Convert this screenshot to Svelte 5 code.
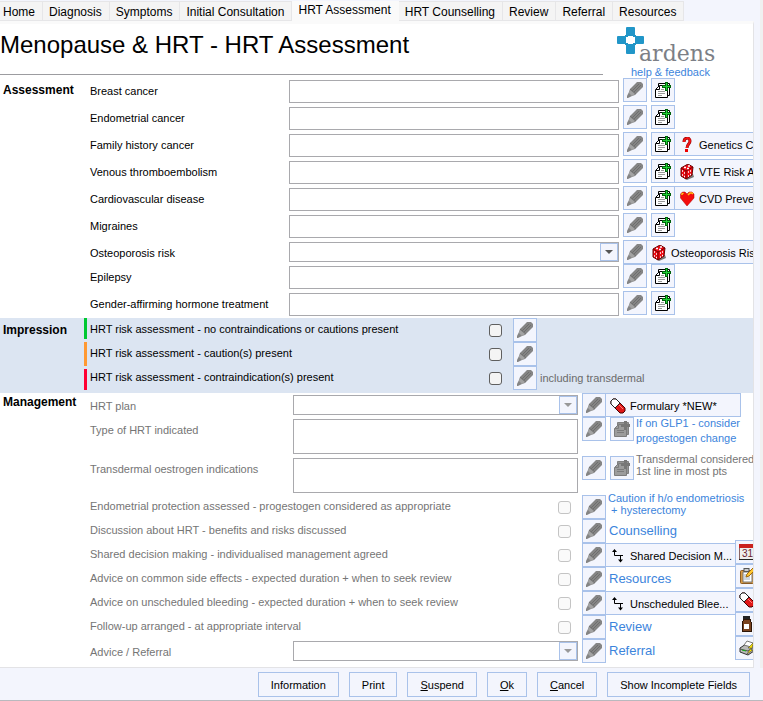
<script lang="ts">
  const tabs = ['Home', 'Diagnosis', 'Symptoms', 'Initial Consultation', 'HRT Assessment', 'HRT Counselling', 'Review', 'Referral', 'Resources'];
  let active = $state('HRT Assessment');

  const assessment = [
    { id: 'breast', label: 'Breast cancer' },
    { id: 'endometrial', label: 'Endometrial cancer' },
    { id: 'family', label: 'Family history cancer', icon: 'question', action: 'Genetics Counselling' },
    { id: 'vte', label: 'Venous thromboembolism', icon: 'dice', action: 'VTE Risk Assessment' },
    { id: 'cvd', label: 'Cardiovascular disease', icon: 'heart', action: 'CVD Prevention' },
    { id: 'migraines', label: 'Migraines' },
    { id: 'osteo', label: 'Osteoporosis risk', icon: 'dice', action: 'Osteoporosis Risk', select: true },
    { id: 'epilepsy', label: 'Epilepsy' },
    { id: 'gender', label: 'Gender-affirming hormone treatment' }
  ];

  const impressions = [
    { id: 'none', level: 'green', label: 'HRT risk assessment - no contraindications or cautions present' },
    { id: 'caution', level: 'amber', label: 'HRT risk assessment - caution(s) present' },
    { id: 'contra', level: 'red', label: 'HRT risk assessment - contraindication(s) present', note: 'including transdermal' }
  ];

  const checks = [
    { id: 'protection', label: 'Endometrial protection assessed - progestogen considered as appropriate', caution: true },
    { id: 'discussion', label: 'Discussion about HRT - benefits and risks discussed', link: 'Counselling' },
    { id: 'shared', label: 'Shared decision making - individualised management agreed', action: 'Shared Decision M...' },
    { id: 'effects', label: 'Advice on common side effects - expected duration + when to seek review', link: 'Resources' },
    { id: 'bleeding', label: 'Advice on unscheduled bleeding - expected duration + when to seek review', action: 'Unscheduled Blee...' },
    { id: 'followup', label: 'Follow-up arranged - at appropriate interval', link: 'Review' }
  ];

  const side = [
    { icon: 'calendar', name: 'Calendar' },
    { icon: 'clipboard', name: 'Notes' },
    { icon: 'pill', name: 'Medication' },
    { icon: 'bottle', name: 'Dispensing' },
    { icon: 'printer', name: 'Print' }
  ];
</script>

{#snippet glyph(name: string)}
  <svg class="glyph" viewBox="0 0 16 16" width="16" height="16" aria-hidden="true">
    {#if name === 'pen'}
      <path d="M10 0h4l2 2v3L8 13l-3 1-4 2H0v-2l2-4 1-3z" fill="#858585" />
      <path d="M5 9l7-7M7 10l7-7" stroke="#6e6e6e" fill="none" />
      <path d="M3 8l5 4-3 2-3-3z" fill="#a3a3a3" />
      <path d="M3 7l6 5" stroke="#737373" fill="none" />
    {:else if name === 'docs'}
      <path d="M3.5 1.5h11v12h-11z" fill="#fff" stroke="#000" />
      <path d="M4.5 3.5h8v12h-12v-8z" fill="#fff" stroke="#000" />
      <path d="M1 7.5h3.5V4" fill="none" stroke="#000" />
      <path d="M6 7.500h3M3 9.500h7M3 11.500h7M3 13.500h4" stroke="#9a9a9a" />
      <path d="M10 0h3v3h3v3h-3v3h-3V6H7V3h3z" fill="#00600a" />
      <path d="M11 1h1v3h3v1h-3v3h-1V5H8V4h3z" fill="#1fd034" />
    {:else if name === 'docs-off'}
      <path d="M3.5 1.5h11v12h-11z" fill="#939393" stroke="#808080" />
      <path d="M4.5 3.5h8v12h-12v-8z" fill="#9c9c9c" stroke="#7c7c7c" />
      <path d="M1 7.5h3.5V4M3 9.500h7M3 11.500h7" fill="none" stroke="#7c7c7c" />
      <path d="M10 0h3v3h3v3h-3v3h-3V6H7V3h3z" fill="#777" />
    {:else if name === 'question'}
      <path d="M5 5c0-5 6-5 6-1 0 3-3 3-3 7" fill="none" stroke="#8a0000" stroke-width="3" />
      <path d="M5 5c0-5 6-5 6-1 0 3-3 3-3 7" fill="none" stroke="#f21414" stroke-width="2" />
      <rect x="6" y="12" width="3" height="3" fill="#e00" />
    {:else if name === 'dice'}
      <path d="M3 12l5 4 7-3-1-3z" fill="#777" />
      <path d="M2 4l7-4 5 3-1 8-6 4-5-3z" fill="#ee0a14" stroke="#600" />
      <path d="M2 4l5 3 7-4M7 7v8" stroke="#700" fill="none" />
      <path d="M5 3.500h2M9 2h2M8 4.500h2M3 7h1M5 9h1M3 11h1M5 12.500h1M9 8h1M11 7h1M9 12h1M11 10.500h1" stroke="#fff" stroke-width="1.500" />
    {:else if name === 'heart'}
      <path d="M8 15L1.500 7V3l2-2h2.500l2 2 2-2h3l2 2v4z" fill="#f40c0c" stroke="#a00" stroke-width="0.500" />
      <path d="M3 4V3l1.500-1M9 4l2-2h2l1 1" fill="none" stroke="#ffc21a" stroke-width="1.500" />
    {:else if name === 'pill'}
      <path d="M1 3l2-2h3l9 9v3l-2 2h-3L1 6z" fill="#e01818" stroke="#400" />
      <path d="M1 3l2-2h3l4 4-5 5-4-4z" fill="#fff" stroke="#222" />
      <path d="M9 7l4 4" stroke="#ff8080" />
    {:else if name === 'arrows'}
      <path d="M4.500 2V7.500H13M10.500 7.500V14" fill="none" stroke="#000" />
      <path d="M2 4h5L4.500 1zM8 11.500h5l-2.500 3z" />
    {:else if name === 'calendar'}
      <g shape-rendering="crispEdges">
        <rect x="0.500" y="1.500" width="17" height="14" fill="#eee" stroke="#8b6464" />
        <rect x="0" y="0" width="18" height="4" fill="#c9211e" />
        <path d="M0 15.500h14l2-3" stroke="#222" fill="none" />
      </g>
      <text x="3" y="13" font-size="10" fill="#6b1d2f">31</text>
    {:else if name === 'clipboard'}
      <rect x="1.500" y="2.500" width="13" height="13" rx="1" fill="#d69a45" stroke="#8a5a22" />
      <path d="M4 4h9v10H4z" fill="#fff" stroke="#777" />
      <rect x="5" y="0.500" width="5" height="3" fill="#ccc" stroke="#555" />
      <path d="M5 7h5M5 9h6M5 11h6" stroke="#9ab" />
      <path d="M7 9l1-3 6-6 2 2-6 6z" fill="#ffc832" stroke="#a06a10" />
    {:else if name === 'bottle'}
      <g shape-rendering="crispEdges">
        <rect x="4" y="0" width="7" height="3" fill="#222" />
        <path d="M4 3h7v2l1 1v9H3V6l1-1z" fill="#7a431f" stroke="#2c1608" />
        <rect x="5" y="8" width="5" height="5" fill="#fff" />
      </g>
    {:else if name === 'printer'}
      <path d="M1 8l6-4 8 2v5l-6 4-8-3z" fill="#b9b9b9" stroke="#333" />
      <path d="M5 5l3-4 6 2-2 4z" fill="#fff" stroke="#777" />
      <path d="M1 9l8 2 6-4" fill="none" stroke="#555" />
      <path d="M3 10l4 1" stroke="#1a1" />
      <path d="M15 2l-6 6h3l-4 6 6-4h-2z" fill="#ffe600" stroke="#333" stroke-width="0.500" />
    {/if}
  </svg>
{/snippet}

{#snippet tool(icon: string, name: string)}
  <button type="button" class="tool" aria-label={name}>{@render glyph(icon)}</button>
{/snippet}

{#snippet combo(id: string, disabled: boolean)}
  <div class="combo" class:disabled>
    <select {id} {disabled}><option></option></select>
    <span class="drop" aria-hidden="true"></span>
  </div>
{/snippet}

<div class="page">
  <div class="main">
    <nav class="tabs">
      {#each tabs as tab}
        <button type="button" class="tab" class:active={tab === active} onclick={() => (active = tab)}>{tab}</button>
      {/each}
    </nav>

    <main class="panel">
      <header>
        <h1>Menopause &amp; HRT - HRT Assessment</h1>
        <div class="brand">
          <svg viewBox="0 0 104 40" width="104" height="40" role="img" aria-label="ardens">
            <g fill="#2196c8">
              <rect x="9" y="2" width="9" height="9" rx="1" />
              <rect x="0" y="11" width="9" height="8" rx="1" />
              <rect x="18" y="11" width="9" height="8" rx="1" />
              <rect x="9" y="19" width="9" height="10" rx="1" />
              <path d="M8 10h3v2H8zM16 10h3v2h-3zM8 18h3v2H8zM16 18h3v2h-3z" />
            </g>
            <text x="22" y="36" class="wordmark">ardens</text>
          </svg>
          <a href="#help">help &amp; feedback</a>
        </div>
      </header>

      <section class="assessment">
        <h2>Assessment</h2>
        <div class="rows">
          {#each assessment as row}
            <div class="row" class:tight={row.select}>
              <label for={row.id}>{row.label}</label>
              {#if row.select}
                {@render combo(row.id, false)}
              {:else}
                <input type="text" id={row.id} />
              {/if}
              <div class="actions">
                {@render tool('pen', `Edit ${row.label}`)}
                {#if !row.select}
                  <span class="spaced">{@render tool('docs', `Add ${row.label}`)}</span>
                {/if}
                {#if row.action}
                  <button type="button" class="wide">{@render glyph(row.icon)}{row.action}</button>
                {/if}
              </div>
            </div>
          {/each}
        </div>
      </section>

      <section class="impression">
        <h2>Impression</h2>
        <div class="rows">
          {#each impressions as row}
            <div class="row">
              <span class="bar {row.level}"></span>
              <label for={row.id}>{row.label}</label>
              <input type="checkbox" id={row.id} />
              <div class="actions">
                {@render tool('pen', `Edit ${row.label}`)}
                {#if row.note}<span class="remark">{row.note}</span>{/if}
              </div>
            </div>
          {/each}
        </div>
      </section>

      <section class="management">
        <h2>Management</h2>
        <div class="rows">
          <div class="row">
            <label for="plan">HRT plan</label>
            {@render combo('plan', true)}
            <div class="actions">
              {@render tool('pen', 'Edit HRT plan')}
              <button type="button" class="wide formulary">{@render glyph('pill')}Formulary *NEW*</button>
            </div>
          </div>
          <div class="row tall">
            <label for="type">Type of HRT indicated</label>
            <textarea id="type" disabled></textarea>
            <div class="actions">
              {@render tool('pen', 'Edit type of HRT')}
              <span class="spaced">{@render tool('docs-off', 'Add type of HRT')}</span>
              <a class="note loose" href="#glp1">If on GLP1 - consider<br />progestogen change</a>
            </div>
          </div>
          <div class="row tall">
            <label for="transdermal">Transdermal oestrogen indications</label>
            <textarea id="transdermal" disabled></textarea>
            <div class="actions">
              {@render tool('pen', 'Edit transdermal')}
              <span class="spaced">{@render tool('docs-off', 'Add transdermal')}</span>
              <span class="note">Transdermal considered<br />1st line in most pts</span>
            </div>
          </div>

          <div class="split">
            <div class="checks">
              {#each checks as row}
                <div class="row">
                  <label for={row.id}>{row.label}</label>
                  <input type="checkbox" id={row.id} disabled />
                  <div class="actions">
                    {@render tool('pen', `Edit ${row.label}`)}
                    {#if row.caution}
                      <a class="note" href="#caution">Caution if h/o endometriosis<br />&nbsp;+ hysterectomy</a>
                    {:else if row.link}
                      <a class="jump" href="#{row.link}">{row.link}</a>
                    {:else}
                      <button type="button" class="wide fill">{@render glyph('arrows')}{row.action}</button>
                    {/if}
                  </div>
                </div>
              {/each}
              <div class="row last">
                <label for="advice">Advice / Referral</label>
                {@render combo('advice', true)}
                <div class="actions">
                  {@render tool('pen', 'Edit advice')}
                  <a class="jump" href="#Referral">Referral</a>
                </div>
              </div>
            </div>
            <aside>
              {#each side as item}
                {@render tool(item.icon, item.name)}
              {/each}
            </aside>
          </div>
        </div>
      </section>
    </main>
  </div>

  <footer>
    <button type="button">Information</button>
    <button type="button">Print</button>
    <button type="button"><u>S</u>uspend</button>
    <button type="button"><u>O</u>k</button>
    <button type="button"><u>C</u>ancel</button>
    <button type="button">Show Incomplete Fields</button>
  </footer>
</div>

<style>
  :global(body) {
    background: #f3f5fd;
  }
  .page {
    font-family: 'Liberation Sans', Arial, sans-serif;
    font-size: 11px;
    color: #000;
    background: #f3f5fd;
    border-bottom: 1px solid #b9b9be;
  }
  .page * {
    box-sizing: border-box;
  }
  button, input, select, textarea {
    font: inherit;
    color: inherit;
    margin: 0;
    border-radius: 0;
  }
  a {
    color: #3c84dc;
    text-decoration: none;
  }
  .main {
    border-right: 3px solid #f0f0f0;
    padding-right: 6px;
  }

  .tabs {
    display: flex;
    height: 21px;
    padding-top: 1px;
  }
  .tab {
    flex: none;
    height: 20px;
    padding: 2px 7px 0 6px;
    border: 1px solid #e6e6e8;
    border-left: 0;
    background: #f4f4f4;
    font-size: 12px;
    line-height: 16px;
  }
  .tab:first-child {
    padding-left: 3px;
  }
  .tab.active {
    padding-top: 0;
    padding-bottom: 3px;
    border-color: #fafafa;
    background: #fafafa;
  }

  .panel {
    border-right: 1px solid #e3e3e6;
    border-bottom: 1px solid #e3e3e6;
    border-top: 3px solid #fafafa;
    background: #fff;
    overflow: hidden;
    padding-bottom: 4px;
  }
  header {
    display: flex;
    align-items: flex-start;
    height: 54px;
  }
  h1 {
    flex: 1;
    margin: 0;
    height: 51px;
    font-size: 24px;
    font-weight: 400;
    line-height: 42px;
    white-space: nowrap;
    border-bottom: 1px solid #9c9ca0;
  }
  .brand {
    width: 150px;
    padding-left: 14px;
    display: flex;
    flex-direction: column;
  }
  .brand svg {
    display: block;
    margin-top: 1px;
  }
  .wordmark {
    font-family: 'DejaVu Serif', serif;
    font-size: 22px;
    fill: #7c7f86;
  }
  .brand a {
    line-height: 14px;
    padding-left: 14px;
  }

  section {
    display: flex;
  }
  h2 {
    flex: none;
    width: 84px;
    margin: 0;
    padding-left: 3px;
    font-size: 12px;
    line-height: 24px;
  }
  .rows {
    flex: 1;
    min-width: 0;
  }
  .row {
    display: grid;
    height: 24px;
  }
  .row label {
    line-height: 26px;
    padding-left: 6px;
    white-space: nowrap;
  }
  .row > input[type='text'], .combo, textarea {
    width: 100%;
    height: 23px;
    margin-top: 2px;
  }
  input[type='text'], select, textarea {
    border: 1px solid #a9a9ad;
    background: #fff;
    outline: 0;
  }
  .combo {
    position: relative;
    height: 20px;
  }
  select {
    display: block;
    width: 100%;
    height: 20px;
    appearance: none;
    opacity: 1;
  }
  .drop {
    position: absolute;
    top: 1px;
    right: 1px;
    bottom: 1px;
    width: 18px;
    border: 1px solid #a9c2ea;
    background: #f3f5fd;
    pointer-events: none;
  }
  .drop::after {
    content: '';
    position: absolute;
    left: 4px;
    top: 6px;
    border: 4px solid transparent;
    border-top-color: #555;
    border-bottom: 0;
  }
  .disabled .drop::after {
    border-top-color: #999;
  }
  textarea {
    display: block;
    height: 35px;
    resize: none;
  }

  .actions {
    display: flex;
    align-items: flex-start;
    padding-left: 4px;
    min-width: 0;
  }
  .tool, .wide {
    flex: none;
    display: flex;
    align-items: center;
    height: 24px;
    border: 1px solid #a9c2ea;
    background: #f3f5fd;
    padding: 0;
  }
  .tool {
    width: 24px;
    justify-content: center;
  }
  .glyph {
    flex: none;
    display: block;
  }
  .spaced {
    margin-left: 4px;
  }
  .wide {
    margin-left: -1px;
    padding: 1px 4px 0;
    gap: 4px;
    white-space: nowrap;
  }

  .assessment .row {
    grid-template-columns: 205px 1fr 134px;
    margin-bottom: 3px;
  }
  .assessment .row.tight {
    margin-bottom: 0;
  }

  .impression {
    background: #dce5f2;
    padding-bottom: 3px;
  }
  .impression .row {
    grid-template-columns: 3px 1fr 24px 240px;
  }
  .impression label {
    line-height: 22px;
    padding-left: 3px;
  }
  .impression .actions {
    padding: 0;
  }
  .bar.green {
    background: #00c832;
    margin-bottom: 3px;
  }
  .bar.amber {
    background: #ff9933;
  }
  .bar.red {
    background: #ff0033;
    margin-top: 3px;
  }
  input[type='checkbox'] {
    width: 13px;
    height: 13px;
    align-self: center;
    appearance: none;
    border: 1px solid #5f5f5f;
    border-radius: 3px;
    background: #f4f4f4;
  }
  input[type='checkbox']:disabled {
    border-color: #c4c4c4;
    background: #fafafa;
  }
  .remark {
    padding-left: 3px;
    line-height: 24px;
    color: #6a6a6a;
  }

  .management h2 {
    line-height: 18px;
  }
  .management label, .note {
    color: #757575;
  }
  .management .row {
    grid-template-columns: 209px 1fr 175px;
  }
  .management .row.tall {
    height: 39px;
  }
  .formulary {
    width: 136px;
  }
  .note {
    margin-top: -3px;
    padding-left: 2px;
    line-height: 12px;
    white-space: nowrap;
  }
  .note.loose {
    margin-top: -1px;
    line-height: 15px;
  }
  a.note {
    color: #3c84dc;
  }
  .split {
    display: flex;
  }
  .checks {
    flex: 1;
    min-width: 0;
  }
  .checks label {
    line-height: 22px;
  }
  .checks .last label {
    line-height: 26px;
  }
  .management .checks .row {
    grid-template-columns: 1fr 20px 157px;
  }
  .management .checks .last {
    grid-template-columns: 209px 1fr 157px;
  }
  .jump {
    padding-left: 3px;
    font-size: 13px;
    line-height: 24px;
  }
  .wide.fill {
    flex: 1;
    margin-right: -1px;
  }
  aside {
    flex: none;
    width: 18px;
    padding-top: 45px;
    overflow: hidden;
    z-index: 1;
  }
  .checks .note {
    position: relative;
  }

  footer {
    display: flex;
    justify-content: flex-end;
    gap: 10px;
    padding: 4px 13px 3px;
  }
  footer button {
    height: 25px;
    padding: 0 12px;
    border: 1px solid #a9c2ea;
    background: #f3f5fd;
    white-space: nowrap;
  }
</style>
